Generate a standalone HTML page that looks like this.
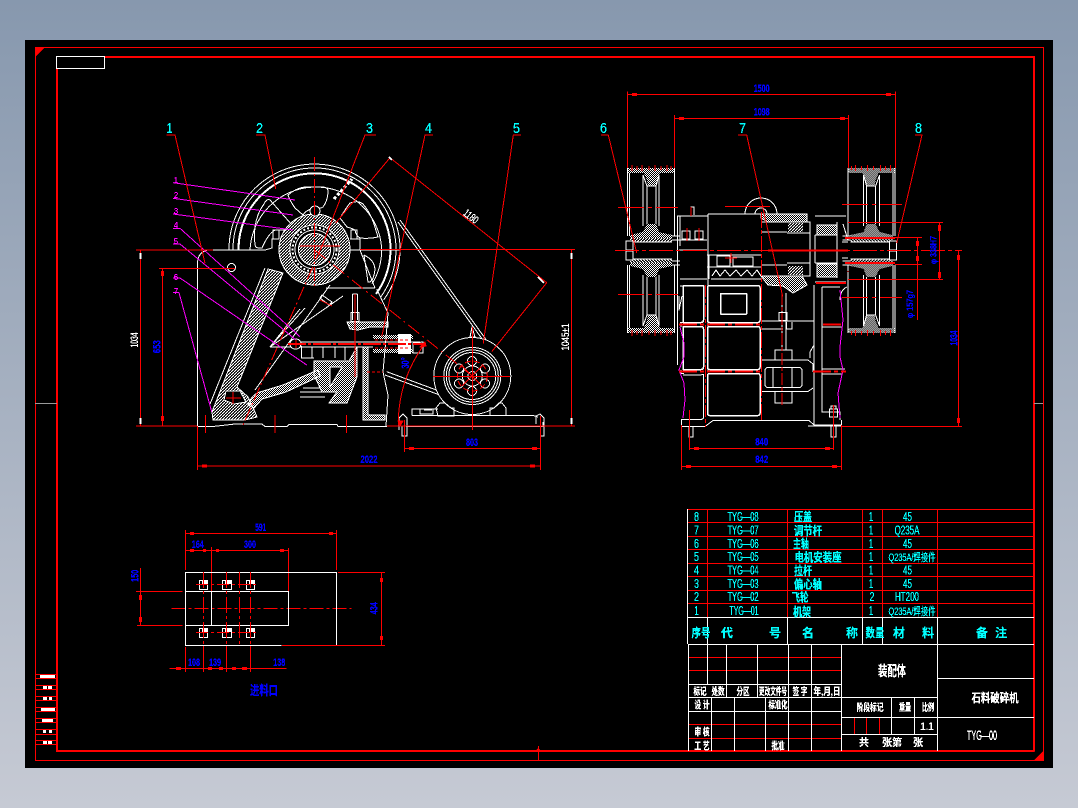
<!DOCTYPE html>
<html><head><meta charset="utf-8"><style>
html,body{margin:0;padding:0;width:1078px;height:808px;overflow:hidden;background:linear-gradient(#8798ae,#c6cad4)}
svg{position:absolute;left:0;top:0;display:block}
text{font-family:"Liberation Sans","Noto Sans CJK SC",sans-serif;text-anchor:middle}
.c text,.c{fill:#0ff}.b text,.b{fill:#00f;font-weight:bold}.w text,.w{fill:#fff}.m text,.m{fill:#f0f}
.k{font-weight:bold}
</style></head><body>
<svg width="1078" height="808" viewBox="0 0 1078 808" shape-rendering="crispEdges" fill="none" stroke-linejoin="round">
<defs>
<pattern id="h" width="3" height="3" patternUnits="userSpaceOnUse"><path d="M0 3L3 0" stroke="#fff" stroke-width="1.1"/></pattern>
<pattern id="x" width="2" height="2" patternUnits="userSpaceOnUse"><rect width="1" height="1" fill="#fff"/><rect x="1" y="1" width="1" height="1" fill="#fff"/></pattern>
<filter id="t" filterUnits="userSpaceOnUse" x="0" y="0" width="1078" height="808" color-interpolation-filters="sRGB"><feComponentTransfer><feFuncA type="discrete" tableValues="0 1 1 1"/></feComponentTransfer></filter>
<g id="wh">
<path stroke="#fff" d="M627.5 168V236M629.5 173V236M674.5 168V236M643 175V226M647 186V224M656 186V224M659 175V226M643 175L647 186M659 175L656 186M647 186H656M630 242H672M672 236H680M672 240H680"/>
<rect x="627.5" y="168" width="47" height="5" fill="url(#x)"/>
<polygon points="644,173 660,173 657,180 656,186 648,186 647,180" fill="url(#x)"/>
<polygon points="647,224 656,224 659,232 672,235 672,238 630,238 630,235 643,232" fill="url(#x)"/>
<rect x="630" y="238" width="42" height="4" fill="url(#h)"/>
<rect x="626" y="241" width="7" height="9" fill="#000" stroke="#fff"/>
<path stroke="#f00" d="M632 165V171M637 166V170M642 165V171M649 166V170M655 165V171M661 166V170M667 165V171M671 166V170"/>
</g>
<g id="fw">
<use href="#wh"/>
<use href="#wh" transform="matrix(1 0 0 -1 0 501)"/>
</g>
</defs>
<rect x="25" y="40" width="1028" height="728" fill="#000"/>

<!-- drawing frame -->
<g stroke="#f00">
<rect x="35.5" y="47.5" width="1008" height="713"/>
<rect x="57" y="57" width="977" height="694" stroke-width="2"/>
<path d="M36 674.5H56M36 678.5H56M36 685.5H56M36 689.5H56M36 696.5H56M36 700.5H56M36 707.5H56M36 711.5H56M36 718.5H56M36 722.5H56M36 729.5H56M36 734.5H56M36 740.5H56M36 744.5H56"/>
</g>
<polygon points="35,48 44,48 35,57" fill="#f00"/>
<polygon points="1043,751 1043,760 1034,760" fill="#f00"/>
<polygon points="535,751 541,751 538,748" fill="#f00"/>
<path stroke="#9a9a9a" d="M35 403.5H57M1034 403.5H1043"/>
<path stroke="#f00" d="M538.5 746V760"/>
<rect x="56.5" y="56.5" width="48" height="12" fill="#000" stroke="#fff"/>
<g fill="#fff">
<rect x="40" y="675" width="15" height="3"/><rect x="43" y="686" width="4" height="3"/><rect x="48" y="686" width="4" height="3"/>
<rect x="43" y="697" width="4" height="3"/><rect x="49" y="697" width="3" height="3"/><rect x="41" y="708" width="14" height="3"/>
<rect x="42" y="719" width="11" height="3"/><rect x="43" y="730" width="3" height="3"/><rect x="49" y="730" width="3" height="3"/>
<rect x="43" y="741" width="4" height="3"/><rect x="48" y="741" width="4" height="3"/>
</g>

<!-- SIDE VIEW white -->
<g stroke="#fff">
<path d="M229 250A85.5 85.5 0 1 1 383.7 299.8"/>
<path d="M233 250A81.5 81.5 0 1 1 380.4 297.4"/>
<path stroke-width="2" d="M238.5 250A76 76 0 1 1 376 294"/>
<path d="M250 250A66 66 0 0 1 381 242Q384 264 372 284"/>
<path d="M288 195Q296 188 305 187L322 187Q329 187 328 193Q327 202 323 207Q320 209 312 209Q306 210 303 215L295 208Q290 201 288 195Z"/>
<path d="M270 200L292 225Q293 230 288 230L275 230Q268 234 262 248Q256 249 255 245Q254 236 255 227Q257 213 264 204Q267 198 270 200Z"/>
<path d="M340 218Q346 208 350 203Q358 200 363 204Q370 212 374 224L378 237Q370 239 360 238Q356 236 355 230Q351 228 347 227Z"/>
<path d="M208 250H265M208 250Q197.5 252 197.5 264V426M197.5 426.5H213L235 424L262 424L265 426.5H287L289 424.5H337L338 426.5H387"/>
<circle cx="231.5" cy="267.5" r="4"/>
<path d="M265 250L272 248V239H277M350 250H400M350 239H360V250M360 250L375 288M375 288H326M330 285L255 390M376.7 289L388 313L385 350L383 372L388 395L386 426"/>
<rect x="273" y="230" width="6" height="9"/><rect x="351" y="230" width="6" height="9"/>
<path d="M268 269L212 412M265 268L210 404M364 255Q378 262 374 275Q372 283 368 282L364 255"/>
<path d="M270 347L305 308M270 347H293M343 296L270 347M270 347L300 309"/>
<path d="M290 342H420M290 347H373M301.5 347V358H314M301.5 358L301.5 346M312 347V358M323 347V358M335 347V358M345 347V360"/>
<path d="M300 392H330M300 397H325M303 388H320"/>
<path d="M352.7 294V320M357.7 294V320M352.7 294H357.7"/>
<rect x="351" y="312.5" width="8" height="9"/>
<rect x="290" y="339" width="11" height="10" fill="#000" rx="5"/>
<path d="M398 222L485 343M400 220L487 341M386.7 371.7L450 395M385 375L448 398M413 343V353H423V342L413 343"/>
<path d="M322 295L332 302L329 305L320 298Z"/>
</g>
<polygon points="268,269 283,273 237,387 248,397 255,412 257,417 245,420 213,420 212,412" fill="url(#h)" stroke="#fff"/>
<polygon points="226,391 240,391 246,402 234,404 224,400" fill="#000" stroke="#fff"/>
<path d="M248 405Q252 394 260 392L283 385L318 370L320 376L286 392L262 399L254 408Z" fill="url(#x)" stroke="#fff"/>
<path d="M314 361H349L357 347V377L347 403H329L337 392H322L314 375Z" fill="url(#x)" stroke="#fff"/>
<polygon points="330,367 342,367 330,387" fill="#000" stroke="#fff"/>
<path d="M363 347H368V415H385V420H363Z" fill="url(#x)" stroke="#fff"/>
<path d="M347 322H388V327H370L358 330L350 329Z" fill="url(#x)" stroke="#fff"/>
<rect x="373" y="335" width="40" height="4" fill="url(#x)"/><rect x="373" y="349" width="40" height="4" fill="url(#x)"/>
<rect x="398" y="334" width="13" height="20" fill="#fff"/>
<!-- hub -->
<circle cx="314.5" cy="249.5" r="35.5" fill="#000" stroke="#fff"/>
<circle cx="314.5" cy="249.5" r="35.5" fill="url(#h)"/>
<circle cx="314.5" cy="249.5" r="24.5" fill="#000" stroke="#fff"/>
<circle cx="314.5" cy="249.5" r="22" stroke="#fff" stroke-width="2" stroke-dasharray="2 2"/>
<circle cx="314.5" cy="249.5" r="19.5" stroke="#fff"/>
<circle cx="314.5" cy="249.5" r="16" fill="url(#h)" stroke="#fff"/>
<circle cx="315" cy="211" r="5" fill="#000" stroke="#fff"/>
<path stroke="#fff" stroke-dasharray="3 2" stroke-width="3" d="M334 199L352 179"/>
<!-- motor -->
<g stroke="#fff">
<circle cx="472.3" cy="376" r="38.5" fill="#000"/>
<circle cx="472.3" cy="376" r="28.5"/><circle cx="472.3" cy="376" r="26"/><circle cx="472.3" cy="376" r="23.5"/>
<circle cx="472" cy="361" r="4.5"/><circle cx="485" cy="368.5" r="4.5"/><circle cx="485" cy="383.5" r="4.5"/><circle cx="472" cy="391" r="4.5"/><circle cx="459" cy="383.5" r="4.5"/><circle cx="459" cy="368.5" r="4.5"/>
<circle cx="472.3" cy="376" r="10"/><circle cx="472.3" cy="376" r="4.5"/>
<path d="M470 337L472 327L475 337ZM436 408L440 403H445L451 408H454V416H438ZM490 416V408H494L499 403H502L506 408V416M412 415.5H533L538 417M406 426.5H543V422M412 415.5V409H438M420 409V414H433V409M424 410H432"/>
<path d="M399 430V418L403 414L407 418V436H402V426M536 424V416L540 414L544 418V436H540"/>
</g>

<!-- SIDE VIEW magenta -->
<g stroke="#f0f">
<path d="M173 182.7L295 200M173 198.3L293 215M173 214L293 230M173 228.3H180L300 336.7M173 244H180L296 340M173 278H180L306.7 365M173 292.7H179L211.7 411.7"/>
</g>
<!-- SIDE VIEW red -->
<g stroke="#f00">
<path d="M136 250H213M360 249.5H575M136 426H197M387 426H575M140.7 250V426M162.7 268V426M159 268.3H235M571.7 250V426"/>
<path d="M166.7 135H175L205 263.3M256 135H265L275.7 189M376 135H365L321.7 246.7M433 135H425L381.7 336.7M521 135H513.3L483.3 343.3"/>
<path d="M390 157.7L546.7 282.7M390 157.7L335.7 223M546.7 282.7L491.7 351.7"/>
<path d="M425 343.3Q398 380 398.3 425"/>
<path d="M314.5 157V287" stroke-dasharray="14 3 2 3"/>
<path d="M314.5 250L472.3 376" stroke-dasharray="14 4 2 4"/>
<path d="M321.7 246.7L243 425" stroke-dasharray="14 3 2 3"/>
<path d="M288 344H423" stroke-width="2" stroke-dasharray="18 2 3 2"/>
<path d="M355 294V377M433 376.5H510M472.3 327V430M226 398H241M233 392V404M296 340V348M291 344H301"/>
<path d="M205.7 415V433M275 415V433M346.7 415V433"/>
<path d="M404.3 420V452M197.7 426V470M540.7 416V470M404.3 448.3H540.7M197.7 466H540.7M300 246H340M320 300L332 306"/>
<path stroke-dasharray="3 2" d="M375 340H410M375 348H410M367 372H383"/>
<circle cx="472.3" cy="376" r="15" stroke-dasharray="6 3"/>
<path d="M462 366L482 386M482 366L462 386"/>
<path stroke-width="3" d="M162.7 271V276M162.7 416V421M409 448.3H414M532 448.3H537M202 466H207M530 466H535"/>
<polygon points="398,421 403,421 400,426" fill="#f00"/>
<polygon points="420,347 425,342 426,346" fill="#f00"/>
</g>
<path stroke="#fff" stroke-width="2" d="M140.7 253V259M140.7 418V424M571.7 253V259M571.7 418V424M538 277L544 283M392 160L389 157"/>

<!-- FRONT VIEW -->
<use href="#fw"/>
<use href="#fw" transform="matrix(-1 0 0 1 1522.6 0)"/>
<g stroke="#fff">
<g stroke-width="1.5">
<rect x="707.5" y="285.5" width="52.5" height="37" rx="2"/>
<rect x="720.5" y="293.5" width="26" height="20.5"/>
<rect x="707.5" y="326.5" width="52.5" height="43" rx="2"/>
<rect x="707.5" y="373.5" width="52.5" height="42" rx="2"/>
<path d="M703.5 287V320Q703.5 322.5 701 322.5H683V287Q683 285.5 685 285.5H703.5Z"/>
<path d="M703.5 329V367Q703.5 369.5 701 369.5H683V326.5H701Q703.5 326.5 703.5 329Z"/>
</g>
<path d="M703.5 375V417Q703.5 419.5 700 419.5H681.5V426.5H705L713 420.5H809L814 425H841.5V420M683 375H701Q703.5 373.5 703.5 375"/>
<path d="M681 323V327M681 370V374M689 427V437H693V427M831 426V437H836V426M808 426H841"/>
<path d="M684 373.5H681M680 322.5H684M679 296V310L682 296"/>
<path d="M761 321H814M761 329H783M786.5 322V329H792V322M814 285V426.5M822 287H840M822 287V412H840V420M822 327H842M822 369H845M822 374H842"/>
<path d="M761 360H808M761 391.5H808M808 360L813 364V372M808 391.5L813 388M775 360V350H792V360M775 391.5V403H792V391.5M814 345L810 352V358"/>
<rect x="765" y="367.5" width="37" height="20" rx="3"/>
<path d="M773 367.5V387.5M792 367.5V387.5M782 293V350M786 293V350"/>
<rect x="779" y="312.5" width="8" height="8"/>
<rect x="829.5" y="409" width="8" height="8"/>
<path d="M831 409V406H836V409"/>
<path d="M677.5 216V365M677 216H708V372M680 240H707M679 250H707M680 216V246M708 214H761M708 214V255M707 255H761M707 267H761M711 279H761M709 255V279M707 279H680M702 286H680"/>
<rect x="682" y="231" width="8" height="8"/><rect x="695" y="231" width="8" height="8"/>
<path d="M691 213V207H694V215"/>
<path d="M745 214A16 16 0 0 1 777 214M755 214A6 6 0 0 1 767 214"/>
<rect x="717" y="256" width="13" height="10"/><rect x="733" y="257" width="20" height="9"/>
<path d="M712 276L716 270L720 276L725 270L730 276L736 270L741 276L747 270L752 276L757 270L761 276"/>
<path d="M761 222H787M761 232H787M761 265H787M761 276H787M787 222H810V276H787M787 233H810M787 263H810M815 235H837M815 263H837M815 235V263M837 222V278M815 216H846M843 224L848 240M842 242H848M842 258H848M815 282H846"/>
<path d="M847 287Q840 290 840 300"/>
</g>
<polygon points="761,214 807,214 807,222 768,222 761,218" fill="url(#x)" stroke="#fff"/>
<polygon points="761,276 802,276 807,285 793,293 783,286 768,285" fill="url(#x)" stroke="#fff"/>
<rect x="788" y="223" width="15" height="9" fill="url(#h)"/><rect x="788" y="266" width="15" height="9" fill="url(#h)"/>
<rect x="817" y="225" width="20" height="10" fill="url(#x)" stroke="#fff"/>
<rect x="817" y="264" width="20" height="13" fill="url(#x)" stroke="#fff"/>
<g stroke="#f0f">
<path d="M680 327L684 343L684 357L679 370L684 383L685 400L683 418M840 290L843 320L840 347L840 357L843 370L838 393L840 418"/>
</g>
<g stroke="#f00">
<path d="M627.3 91.7V168M895.3 91.7V168M627.3 94.5H895.3M674.3 115V168M848.7 115V168M674.3 118.5H848.7"/>
<path d="M601 135H608.3L636.7 253M738 135H746.7L782.7 296.7M915 135H922L896.7 243"/>
<path d="M615 250.5H962" stroke-width="1" stroke-dasharray="24 3 4 3"/>
<path d="M761.5 212V420" stroke-dasharray="16 2 4 2"/>
<path d="M618 207.5H678M618 294.5H678M842 204.5H902M842 297.5H902" stroke-dasharray="26 4 4 4"/>
<path d="M848 222.5H943M848 279.5H943M939.3 222V280M895 237.5H922M895 264.5H922M917.3 237V320M848 271V272"/>
<path d="M958.3 250V427M842 426.5H962M689.3 410V450M833.3 405V450M689.3 448.5H833.3M681.3 425V470M841.3 425V470M681.3 466.5H841.3"/>
<path d="M679 324.5H761M679 371.5H761M823 324.5H842M813 371.5H846" stroke-width="2" stroke-dasharray="18 3 4 3"/>
<path d="M705.5 285V427M782 293V405M833.3 405V430" stroke-dasharray="12 2 4 2"/>
<path d="M725 206.5H770" />
<path d="M731 253V263M725 258H737M687 228V241M699 228V241M691 207V216"/>
<path stroke-width="2" d="M768 250.5H848M845 238H895M845 263H895M816 283H846"/>
<path stroke-width="3" d="M632 94.5H637M886 94.5H891M679 118.5H684M840 118.5H845M939.3 225V231M939.3 272V278M917.3 241V246M917.3 256V261M958.3 255V260M958.3 418V423M694 448.5H699M825 448.5H830M686 466.5H691M832 466.5H837"/>
</g>

<!-- PLAN VIEW -->
<g stroke="#f00">
<path d="M282 645.5H385M338 572.5H385" />
<path d="M185.3 530V570M336.7 530V570M185.3 533.7H336M185.3 550.7H288.3M211.3 547V591M288.3 548V591M140.3 568V625M136 591.5H182.7M137 625.5H182.7M381.7 572V645M169.3 668.5H286.7M185.3 647V672M203.3 645V672M226.3 645V672M250.3 645V672"/>
<path stroke-width="3" d="M190 533.7H194M329 533.7H333M190 550.7H194M203 550.7H206M216 550.7H219M280 550.7H284M140.3 595V600M140.3 617V622M381.7 578V582M381.7 636V640M176 668.5H181M208 668.5H212M219 668.5H223M232 668.5H236M242 668.5H247"/>
</g>
<path stroke="#f00" stroke-dasharray="14 3 3 3" fill="none" d="M171.5 608.5H351.5"/>
<path stroke="#fff" d="M281.5 645.5H185.5V572.5H336.5V645.5"/>
<path stroke="#f00" d="M282 645.5H385"/>
<path stroke="#fff" d="M185.5 591.5H288.5V625.5H185.5M211.5 591.5V625.5"/>
<g stroke="#fff">
<rect x="199.5" y="580.5" width="8" height="9"/><rect x="222.5" y="580.5" width="9" height="9"/><rect x="246.5" y="580.5" width="8" height="9"/>
<rect x="199.5" y="628.5" width="8" height="9"/><rect x="222.5" y="628.5" width="9" height="9"/><rect x="246.5" y="628.5" width="8" height="9"/>
</g>
<g fill="#fff"><rect x="202" y="581" width="5" height="3"/><rect x="225" y="581" width="6" height="3"/><rect x="249" y="581" width="5" height="3"/><rect x="202" y="629" width="5" height="3"/><rect x="225" y="629" width="6" height="3"/><rect x="249" y="629" width="5" height="3"/></g>
<path stroke="#f00" stroke-dasharray="16 3 3 3" d="M203.5 572V646M226.5 572V646M239.5 572V646M250.5 572V646"/>
<path stroke="#f00" stroke-dasharray="12 3 3 3" d="M196 584.5H257M196 632.5H257"/>

<!-- TABLE -->
<g stroke="#f00">
<path d="M687 509.5H1034M687 522.5H1034M687 536.5H1034M687 549.5H1034M687 563.5H1034M687 576.5H1034M687 590.5H1034M687 603.5H1034"/>
<path d="M707.5 509V617M787.5 509V617M862.5 509V617M882.5 509V617M937.5 509V617"/>
<path d="M689 657.5H841M689 670.5H841M689 724.5H841M689 738.5H841M854.5 717V734M866.5 717V734M879.5 717V734"/>
</g>
<g stroke="#fff">
<path d="M687.5 509V644M687 617.5H1034M688 644.5H1034M707.5 617V684M787.5 617V644M862.5 617V644M882.5 617V644M937.5 617V751"/>
<path d="M688.5 644V751M726.5 644V697M757.5 644V697M788.5 644V697M811.5 644V697M841.5 644V751"/>
<path d="M689 684.5H841M689 697.5H937M689 711.5H841M711.5 697V751M734.5 697V751M765.5 697V751M788.5 697V751M811.5 697V751"/>
<path d="M841 717.5H1034M841 734.5H937M891.5 697V734M914.5 697V734M937 678.5H1034"/>
</g>

<!-- TEXT -->
<g filter="url(#t)">
<g class="c" font-size="15">
<text x="169.5" y="133" textLength="6" lengthAdjust="spacingAndGlyphs">1</text>
<text x="259.5" y="133" textLength="7" lengthAdjust="spacingAndGlyphs">2</text>
<text x="369.5" y="133" textLength="7" lengthAdjust="spacingAndGlyphs">3</text>
<text x="428.5" y="133" textLength="7" lengthAdjust="spacingAndGlyphs">4</text>
<text x="516.5" y="133" textLength="7" lengthAdjust="spacingAndGlyphs">5</text>
<text x="603.5" y="133" textLength="7" lengthAdjust="spacingAndGlyphs">6</text>
<text x="742.5" y="133" textLength="7" lengthAdjust="spacingAndGlyphs">7</text>
<text x="918.5" y="133" textLength="7" lengthAdjust="spacingAndGlyphs">8</text>
</g>
<g class="m" font-size="8">
<text x="176" y="183">1</text><text x="176" y="198">2</text><text x="176" y="214">3</text><text x="176" y="228">4</text><text x="176" y="244">5</text><text x="176" y="280">6</text><text x="176" y="294">7</text>
</g>
<g class="b" font-size="11">
<text x="156" y="351" transform="rotate(-90 156 346.7)" textLength="13" lengthAdjust="spacingAndGlyphs">653</text>
<text x="472" y="446" textLength="12" lengthAdjust="spacingAndGlyphs">803</text>
<text x="369" y="463" textLength="17" lengthAdjust="spacingAndGlyphs">2022</text>
<text x="405" y="367" transform="rotate(-90 405 363)" textLength="11" lengthAdjust="spacingAndGlyphs">30°</text>
<text x="761.7" y="92" textLength="16" lengthAdjust="spacingAndGlyphs">1500</text>
<text x="761.7" y="115.5" textLength="16" lengthAdjust="spacingAndGlyphs">1098</text>
<text x="761.7" y="445.5" textLength="13" lengthAdjust="spacingAndGlyphs">840</text>
<text x="761.7" y="463" textLength="13" lengthAdjust="spacingAndGlyphs">842</text>
<text x="933.5" y="253" font-size="9" transform="rotate(-90 933.5 250)" textLength="28" lengthAdjust="spacingAndGlyphs">φ 338H7</text>
<text x="910" y="307" font-size="9" transform="rotate(-90 910 304)" textLength="28" lengthAdjust="spacingAndGlyphs">φ 157g7</text>
<text x="953.5" y="342" transform="rotate(-90 953.5 338)" textLength="15" lengthAdjust="spacingAndGlyphs">1034</text>
<text x="260.7" y="531" textLength="11" lengthAdjust="spacingAndGlyphs">591</text>
<text x="197.7" y="548" textLength="12" lengthAdjust="spacingAndGlyphs">164</text>
<text x="250" y="548" textLength="12" lengthAdjust="spacingAndGlyphs">300</text>
<text x="134" y="580" transform="rotate(-90 134 575.7)" textLength="12" lengthAdjust="spacingAndGlyphs">150</text>
<text x="374" y="612" transform="rotate(-90 374 608.3)" textLength="12" lengthAdjust="spacingAndGlyphs">434</text>
<text x="194" y="666" textLength="12" lengthAdjust="spacingAndGlyphs">108</text>
<text x="215" y="666" textLength="12" lengthAdjust="spacingAndGlyphs">139</text>
<text x="279.3" y="666" textLength="12" lengthAdjust="spacingAndGlyphs">138</text>
<text x="264" y="695" font-size="13" textLength="28" lengthAdjust="spacingAndGlyphs">进料口</text>
</g>
<g class="w" font-size="11">
<text x="134" y="344" transform="rotate(-90 134 340)" textLength="15" lengthAdjust="spacingAndGlyphs">1034</text>
<text x="565" y="341" transform="rotate(-90 565 337)" textLength="27" lengthAdjust="spacingAndGlyphs">1045±1</text>
<text x="470.7" y="220" transform="rotate(38 470.7 216.7)" textLength="16" lengthAdjust="spacingAndGlyphs">1180</text>
</g>
<g class="c" font-size="13">
<text x="696.5" y="521" textLength="5" lengthAdjust="spacingAndGlyphs">8</text><text x="696.5" y="534.5" textLength="5" lengthAdjust="spacingAndGlyphs">7</text><text x="696.5" y="548" textLength="5" lengthAdjust="spacingAndGlyphs">6</text><text x="696.5" y="561" textLength="5" lengthAdjust="spacingAndGlyphs">5</text><text x="696.5" y="574.5" textLength="5" lengthAdjust="spacingAndGlyphs">4</text><text x="696.5" y="588" textLength="5" lengthAdjust="spacingAndGlyphs">3</text><text x="696.5" y="601" textLength="5" lengthAdjust="spacingAndGlyphs">2</text><text x="696.5" y="615" textLength="4" lengthAdjust="spacingAndGlyphs">1</text>
<text x="743" y="521" textLength="31" lengthAdjust="spacingAndGlyphs">TYG—08</text>
<text x="743" y="534.5" textLength="31" lengthAdjust="spacingAndGlyphs">TYG—07</text>
<text x="743" y="548" textLength="31" lengthAdjust="spacingAndGlyphs">TYG—06</text>
<text x="743" y="561" textLength="31" lengthAdjust="spacingAndGlyphs">TYG—05</text>
<text x="743" y="574.5" textLength="31" lengthAdjust="spacingAndGlyphs">TYG—04</text>
<text x="743" y="588" textLength="31" lengthAdjust="spacingAndGlyphs">TYG—03</text>
<text x="743" y="601" textLength="31" lengthAdjust="spacingAndGlyphs">TYG—02</text>
<text x="744" y="615" textLength="29" lengthAdjust="spacingAndGlyphs">TYG—01</text>
<text x="871" y="521" textLength="4" lengthAdjust="spacingAndGlyphs">1</text><text x="871" y="534.5" textLength="4" lengthAdjust="spacingAndGlyphs">1</text><text x="871" y="548" textLength="4" lengthAdjust="spacingAndGlyphs">1</text><text x="871" y="561" textLength="4" lengthAdjust="spacingAndGlyphs">1</text><text x="871" y="574.5" textLength="4" lengthAdjust="spacingAndGlyphs">1</text><text x="871" y="588" textLength="4" lengthAdjust="spacingAndGlyphs">1</text><text x="872" y="601" textLength="5" lengthAdjust="spacingAndGlyphs">2</text><text x="871" y="615" textLength="4" lengthAdjust="spacingAndGlyphs">1</text>
<text x="907.5" y="521" textLength="9" lengthAdjust="spacingAndGlyphs">45</text>
<text x="907" y="534.5" textLength="25" lengthAdjust="spacingAndGlyphs">Q235A</text>
<text x="907.5" y="548" textLength="9" lengthAdjust="spacingAndGlyphs">45</text>
<text x="912" y="561" font-size="11" textLength="47" lengthAdjust="spacingAndGlyphs">Q235A/焊接件</text>
<text x="907.5" y="574.5" textLength="9" lengthAdjust="spacingAndGlyphs">45</text>
<text x="907.5" y="588" textLength="9" lengthAdjust="spacingAndGlyphs">45</text>
<text x="907" y="601" textLength="24" lengthAdjust="spacingAndGlyphs">HT200</text>
<text x="912" y="615" font-size="11" textLength="47" lengthAdjust="spacingAndGlyphs">Q235A/焊接件</text>
<g class="k" font-size="12">
<text x="803" y="521" textLength="18" lengthAdjust="spacingAndGlyphs">压盖</text>
<text x="808" y="535" textLength="28" lengthAdjust="spacingAndGlyphs">调节杆</text>
<text x="801" y="548" textLength="16" lengthAdjust="spacingAndGlyphs">主轴</text>
<text x="818" y="561.5" textLength="47" lengthAdjust="spacingAndGlyphs">电机安装座</text>
<text x="803" y="575" textLength="18" lengthAdjust="spacingAndGlyphs">拉杆</text>
<text x="808" y="588.5" textLength="28" lengthAdjust="spacingAndGlyphs">偏心轴</text>
<text x="800" y="601.5" textLength="17" lengthAdjust="spacingAndGlyphs">飞轮</text>
<text x="802" y="616" textLength="18" lengthAdjust="spacingAndGlyphs">机架</text>
</g>
<g class="k" font-size="12">
<text x="701" y="637" textLength="19" lengthAdjust="spacingAndGlyphs">序号</text>
<text x="727" y="637">代</text><text x="775" y="637">号</text>
<text x="808" y="637">名</text><text x="852" y="637">称</text>
<text x="875" y="637" textLength="19" lengthAdjust="spacingAndGlyphs">数量</text>
<text x="899" y="637">材</text><text x="928" y="637">料</text>
<text x="982" y="637">备</text><text x="1001" y="637">注</text>
</g>
</g>
<g class="w k" font-size="10">
<text x="700" y="695" textLength="13" lengthAdjust="spacingAndGlyphs">标记</text>
<text x="718" y="695" textLength="13" lengthAdjust="spacingAndGlyphs">处数</text>
<text x="743" y="695" textLength="13" lengthAdjust="spacingAndGlyphs">分区</text>
<text x="773" y="695" textLength="28" lengthAdjust="spacingAndGlyphs">更改文件号</text>
<text x="800" y="695" textLength="15" lengthAdjust="spacingAndGlyphs">签 字</text>
<text x="827" y="695" textLength="27" lengthAdjust="spacingAndGlyphs">年,月,日</text>
<text x="702" y="708.5" textLength="15" lengthAdjust="spacingAndGlyphs">设 计</text>
<text x="778" y="708.5" textLength="19" lengthAdjust="spacingAndGlyphs">标准化</text>
<text x="702" y="735.5" textLength="15" lengthAdjust="spacingAndGlyphs">审 核</text>
<text x="702" y="749.5" textLength="15" lengthAdjust="spacingAndGlyphs">工 艺</text>
<text x="778" y="749.5" textLength="13" lengthAdjust="spacingAndGlyphs">批准</text>
<text x="870" y="711" textLength="27" lengthAdjust="spacingAndGlyphs">阶段标记</text>
<text x="905" y="711" textLength="12" lengthAdjust="spacingAndGlyphs">重量</text>
<text x="928" y="711" textLength="12" lengthAdjust="spacingAndGlyphs">比例</text>
<text x="927" y="730" font-weight="normal" font-size="11" textLength="14">1 . 1</text>
<text x="864" y="746">共</text><text x="887" y="746">张</text><text x="897" y="746">第</text><text x="918" y="746">张</text>
<text x="892" y="676" font-size="14" textLength="28" lengthAdjust="spacingAndGlyphs">装配体</text>
<text x="995" y="702" font-size="12" textLength="47" lengthAdjust="spacingAndGlyphs">石料破碎机</text>
<text x="982" y="740" font-size="14" font-weight="normal" textLength="30" lengthAdjust="spacingAndGlyphs">TYG—00</text>
</g>
</g>
</svg>
</body></html>
